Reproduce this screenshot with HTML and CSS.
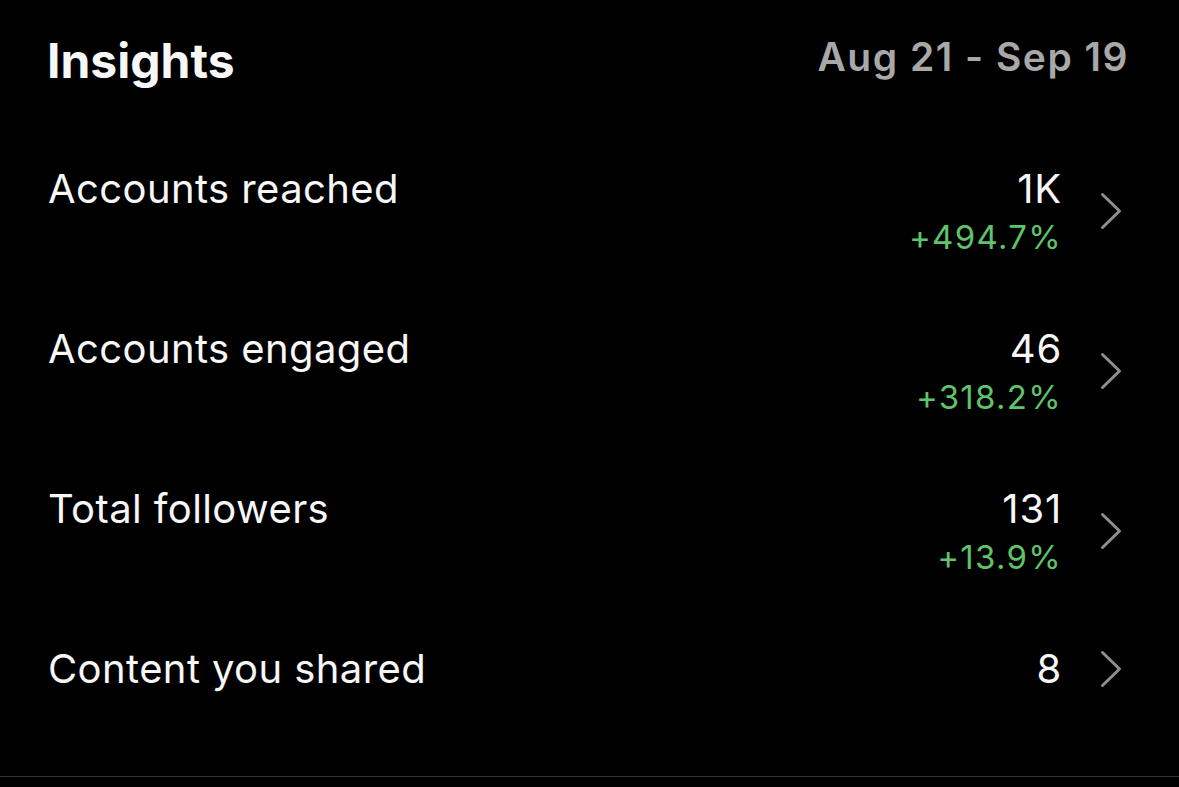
FILE: index.html
```html
<!DOCTYPE html>
<html lang="en">
<head>
  <meta charset="UTF-8" />
  <meta name="viewport" content="width=device-width, initial-scale=1.0"/>
  <title>Insights</title>
  <link rel="stylesheet" href="styles.css">
</head>
<body>

  <!-- Insights card -->
  <div class="insights">
    <div class="insights-header">
      <h1>Insights</h1>
      <span class="date-range">Aug 21 - Sep 19</span>
    </div>

    <ul class="stats">
      <li class="stat-row">
        <span class="stat-label">Accounts reached</span>
        <div class="stat-right">
          <div class="stat-values">
            <span class="stat-value">1K</span>
            <span class="stat-change">+494.7%</span>
          </div>
          <svg class="chevron" width="22" height="38" viewBox="0 0 22 38"><path d="M2.5 2.5 L19.5 19 L2.5 35.5"/></svg>
        </div>
      </li>
      <li class="stat-row">
        <span class="stat-label">Accounts engaged</span>
        <div class="stat-right">
          <div class="stat-values">
            <span class="stat-value">46</span>
            <span class="stat-change">+318.2%</span>
          </div>
          <svg class="chevron" width="22" height="38" viewBox="0 0 22 38"><path d="M2.5 2.5 L19.5 19 L2.5 35.5"/></svg>
        </div>
      </li>
      <li class="stat-row">
        <span class="stat-label">Total followers</span>
        <div class="stat-right">
          <div class="stat-values">
            <span class="stat-value">131</span>
            <span class="stat-change">+13.9%</span>
          </div>
          <svg class="chevron" width="22" height="38" viewBox="0 0 22 38"><path d="M2.5 2.5 L19.5 19 L2.5 35.5"/></svg>
        </div>
      </li>
      <li class="stat-row">
        <span class="stat-label">Content you shared</span>
        <div class="stat-right">
          <div class="stat-values">
            <span class="stat-value">8</span>
          </div>
          <svg class="chevron" width="22" height="38" viewBox="0 0 22 38"><path d="M2.5 2.5 L19.5 19 L2.5 35.5"/></svg>
        </div>
      </li>
    </ul>
  </div>

</body>
</html>
```

FILE: styles.css
```css
body {
  margin: 0;
  font-family: 'Inter', 'Noto Sans', sans-serif;
  background: #000;
  color: #f7f7f7;
  height: 100vh;
  overflow: hidden;
}

.insights {
  padding-top: 32px;
  padding-bottom: 49px;
  border-bottom: 1px solid #333;
}

.insights-header {
  display: flex;
  justify-content: space-between;
  align-items: flex-start;
  padding: 0 50px 0 47px;
  margin-bottom: 41px;
}

h1 {
  margin: 0;
  font-size: 48px;
  line-height: 58px;
  font-weight: 700;
}

.date-range {
  margin-top: 2px;
  font-size: 39px;
  line-height: 46px;
  font-weight: 600;
  letter-spacing: 1.5px;
  color: #a8a8a8;
}

.stats {
  list-style: none;
  margin: 0;
  padding: 0;
}

.stat-row {
  display: flex;
  justify-content: space-between;
  align-items: flex-start;
  padding: 34px 57px 34px 48px;
}

.stat-label {
  font-size: 40px;
  line-height: 48px;
  letter-spacing: 0.4px;
}

.stat-right {
  display: flex;
  align-items: center;
  gap: 38px;
}

.stat-values {
  display: flex;
  flex-direction: column;
  align-items: flex-end;
}

.stat-value {
  font-size: 40px;
  line-height: 48px;
  letter-spacing: 0.8px;
}

.stat-change {
  margin-top: 4px;
  font-size: 33px;
  line-height: 40px;
  letter-spacing: 1.3px;
  color: #5ec36a;
}

.chevron path {
  fill: none;
  stroke: #8e8e8e;
  stroke-width: 3;
  stroke-linecap: round;
  stroke-linejoin: round;
}
```
